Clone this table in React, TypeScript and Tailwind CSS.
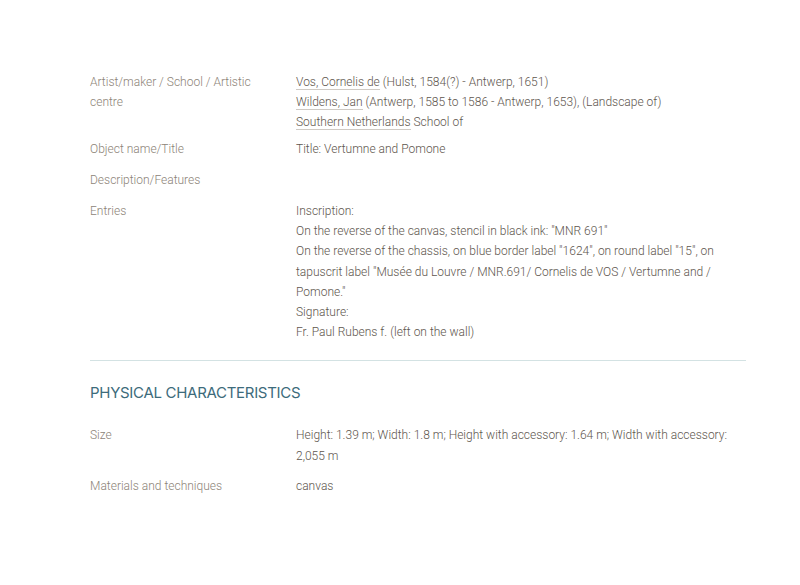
const artists = [
  { name: "Vos, Cornelis de", rest: " (Hulst, 1584(?) - Antwerp, 1651)" },
  { name: "Wildens, Jan", rest: " (Antwerp, 1585 to 1586 - Antwerp, 1653), (Landscape of)" },
  { name: "Southern Netherlands", rest: " School of" },
];

const entries = [
  "Inscription:",
  'On the reverse of the canvas, stencil in black ink: "MNR 691"',
  'On the reverse of the chassis, on blue border label "1624", on round label "15", on tapuscrit label "Musée du Louvre / MNR.691/ Cornelis de VOS / Vertumne and / Pomone."',
  "Signature:",
  "Fr. Paul Rubens f. (left on the wall)",
];

function Row({ label, children, className = "" }: { label: string; children?: React.ReactNode; className?: string }) {
  return (
    <div className={`flex ${className}`}>
      <div className="w-[206px] shrink-0 pr-[30px] text-[#8c8377]">{label}</div>
      <div className="w-[450px] text-[#5e564e]">{children}</div>
    </div>
  );
}

export default function App() {
  return (
    <div className="min-h-[585px] bg-white font-['Roboto',sans-serif] text-[12px] font-light leading-[20.2px]">
      <div className="w-[656px] ml-[90px] pt-[72px]">
        {/* Identification */}
        <Row label="Artist/maker / School / Artistic centre">
          {artists.map((a) => (
            <div key={a.name}>
              <span className="border-b border-[#cfcac4]">{a.name}</span>
              {a.rest}
            </div>
          ))}
        </Row>
        <Row label="Object name/Title" className="mt-[6px]">
          Title: Vertumne and Pomone
        </Row>
        <Row label="Description/Features" className="mt-[11px]">
          {""}
        </Row>
        <Row label="Entries" className="mt-[11px]">
          {entries.map((e) => (
            <div key={e}>{e}</div>
          ))}
        </Row>

        <div className="mt-[18px] h-px bg-[#d3e2e3]" />

        {/* Physical characteristics */}
        <h2 className="mt-[22px] font-['Inter',sans-serif] text-[15px] font-normal tracking-[-0.3px] text-[#3d6b7b] leading-[20px]">
          PHYSICAL CHARACTERISTICS
        </h2>
        <Row label="Size" className="mt-[22px]">
          Height: 1.39 m; Width: 1.8 m; Height with accessory: 1.64 m; Width with accessory: 2,055 m
        </Row>
        <Row label="Materials and techniques" className="mt-[10px]">
          canvas
        </Row>
      </div>
    </div>
  );
}
